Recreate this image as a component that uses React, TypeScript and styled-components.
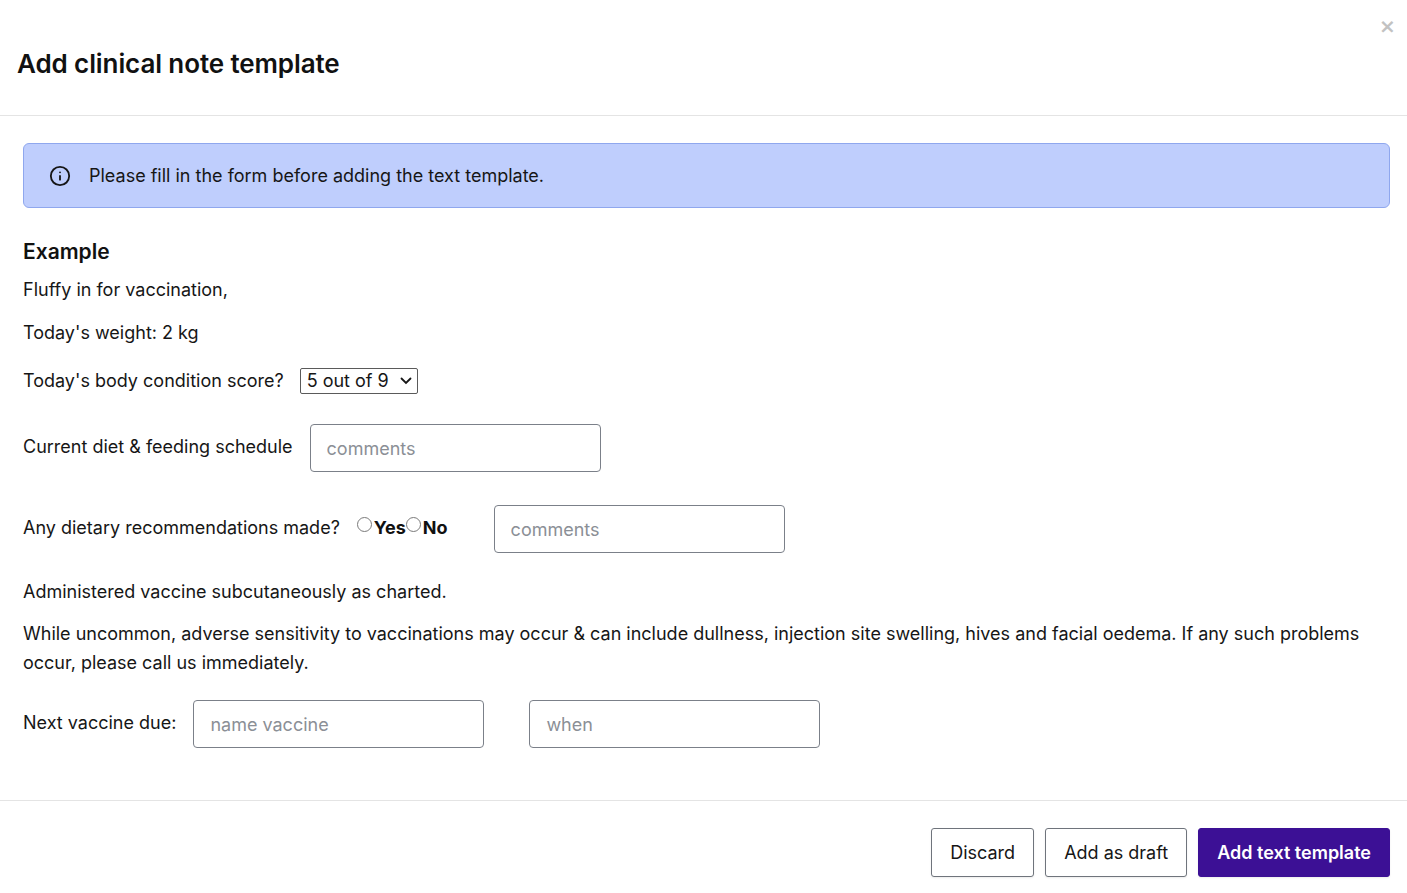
import React from 'react'
import styled, { createGlobalStyle } from 'styled-components'
import { Info } from 'lucide-react'

const GlobalStyle = createGlobalStyle`
  html, body {
    margin: 0;
    padding: 0;
    background: #ffffff;
  }
  body {
    font-family: Inter, "Noto Sans", "Liberation Sans", sans-serif;
    color: #161616;
    -webkit-font-smoothing: antialiased;
  }
  * {
    box-sizing: border-box;
  }
`

const Modal = styled.div`
  width: 1407px;
  min-height: 893px;
  display: flex;
  flex-direction: column;
  background: #fff;
`

const Header = styled.header`
  position: relative;
  height: 116px;
  padding: 46px 17px 0;
  border-bottom: 1px solid #e4e4e4;
`

const Title = styled.h1`
  margin: 0;
  font-size: 26px;
  line-height: 36px;
  font-weight: 600;
  color: #111;
  letter-spacing: -0.1px;
`

const CloseButton = styled.button`
  position: absolute;
  top: 16px;
  right: 12px;
  border: none;
  background: none;
  padding: 0;
  width: 16px;
  height: 20px;
  color: #c2c2c2;
  font-family: "DejaVu Sans", sans-serif;
  font-size: 20px;
  font-weight: 700;
  line-height: 20px;
  cursor: pointer;
`

const Body = styled.main`
  padding: 27px 17px 54px 23px;
  border-bottom: 1px solid #e4e4e4;
`

const Alert = styled.div`
  display: flex;
  align-items: center;
  gap: 18px;
  padding: 18px 25px;
  background: #bfcefd;
  border: 1px solid #8fa7ee;
  border-radius: 6px;
  font-size: 18px;
  line-height: 27px;
  color: #161616;
`

const SectionTitle = styled.h2`
  margin: 29px 0 0;
  font-size: 21px;
  line-height: 30px;
  font-weight: 600;
  color: #111;
`

const Para = styled.p<{ $top: number }>`
  margin: ${(p) => p.$top}px 0 0;
  font-size: 18px;
  line-height: 29px;
`

const Row = styled.div<{ $top: number; $gap: number }>`
  display: flex;
  align-items: center;
  gap: ${(p) => p.$gap}px;
  margin-top: ${(p) => p.$top}px;
  font-size: 18px;
  line-height: 29px;
`

const Label = styled.span`
  white-space: nowrap;
`

const SelectWrap = styled.span`
  position: relative;
  display: inline-flex;
  align-items: center;
`

const Select = styled.select`
  appearance: none;
  width: 118px;
  height: 26px;
  padding: 0 22px 0 6px;
  border: 1px solid #5a5a5a;
  border-radius: 2px;
  background: #fff;
  font-family: Inter, "Liberation Sans", sans-serif;
  font-size: 18px;
  color: #161616;
`

const Chevron = styled.svg`
  position: absolute;
  right: 6px;
  pointer-events: none;
`

const TextInput = styled.input`
  width: 291px;
  height: 48px;
  padding: 0 16px;
  border: 1px solid #7b8089;
  border-radius: 4px;
  font-family: Inter, "Liberation Sans", sans-serif;
  font-size: 18px;
  color: #161616;
  transform: translateY(2px);
  &::placeholder {
    color: #8b8f96;
  }
`

const RadioGroup = styled.span`
  display: inline-flex;
  align-items: center;
`

const Radio = styled.input`
  appearance: none;
  width: 15px;
  height: 15px;
  margin: 0 2px 5px 0;
  border: 1px solid #7a7a7a;
  border-radius: 50%;
  background: #fff;
`

const RadioText = styled.span`
  font-weight: 700;
  color: #111;
`

const Footer = styled.footer`
  display: flex;
  justify-content: flex-end;
  gap: 11px;
  padding: 27px 17px 17px;
`

const Button = styled.button<{ $primary?: boolean }>`
  height: 49px;
  padding: 0 18px;
  border-radius: 3px;
  border: 1px solid ${(p) => (p.$primary ? '#3c1095' : '#6f747c')};
  background: ${(p) => (p.$primary ? '#3c1095' : '#fff')};
  color: ${(p) => (p.$primary ? '#fff' : '#161616')};
  font-family: Inter, "Liberation Sans", sans-serif;
  font-size: 18px;
  font-weight: ${(p) => (p.$primary ? 600 : 400)};
  box-shadow: 0 1px 2px rgba(0, 0, 0, 0.08);
  cursor: pointer;
`

export default function App() {
  return (
    <>
      <GlobalStyle />
      <Modal>
        <Header>
          <Title>Add clinical note template</Title>
          <CloseButton aria-label="Close">×</CloseButton>
        </Header>
        <Body>
          <Alert>
            <Info size={22} strokeWidth={2} color="#161616" />
            <span>Please fill in the form before adding the text template.</span>
          </Alert>

          <SectionTitle>Example</SectionTitle>
          <Para $top={8}>Fluffy in for vaccination,</Para>
          <Para $top={14}>Today's weight: 2 kg</Para>

          <Row $top={19} $gap={16}>
            <Label>Today's body condition score?</Label>
            <SelectWrap>
              <Select defaultValue="5">
                <option value="5">5 out of 9</option>
              </Select>
              <Chevron width="12" height="8" viewBox="0 0 12 8">
                <path d="M1.5 1.5 6 6l4.5-4.5" fill="none" stroke="#161616" strokeWidth="1.8" strokeLinecap="round" />
              </Chevron>
            </SelectWrap>
          </Row>

          <Row $top={27} $gap={17}>
            <Label>Current diet &amp; feeding schedule</Label>
            <TextInput placeholder="comments" />
          </Row>

          <Row $top={33} $gap={17}>
            <Label>Any dietary recommendations made?</Label>
            <RadioGroup>
              <Radio type="radio" name="rec" />
              <RadioText>Yes</RadioText>
              <Radio type="radio" name="rec" />
              <RadioText>No</RadioText>
            </RadioGroup>
            <span style={{ width: 12 }} />
            <TextInput placeholder="comments" />
          </Row>

          <Para $top={26}>Administered vaccine subcutaneously as charted.</Para>
          <Para $top={13}>
            While uncommon, adverse sensitivity to vaccinations may occur &amp; can include dullness, injection site
            swelling, hives and facial oedema. If any such problems occur, please call us immediately.
          </Para>

          <Row $top={21} $gap={17}>
            <Label>Next vaccine due:</Label>
            <TextInput placeholder="name vaccine" />
            <span style={{ width: 11 }} />
            <TextInput placeholder="when" />
          </Row>
        </Body>
        <Footer>
          <Button>Discard</Button>
          <Button>Add as draft</Button>
          <Button $primary>Add text template</Button>
        </Footer>
      </Modal>
    </>
  )
}
